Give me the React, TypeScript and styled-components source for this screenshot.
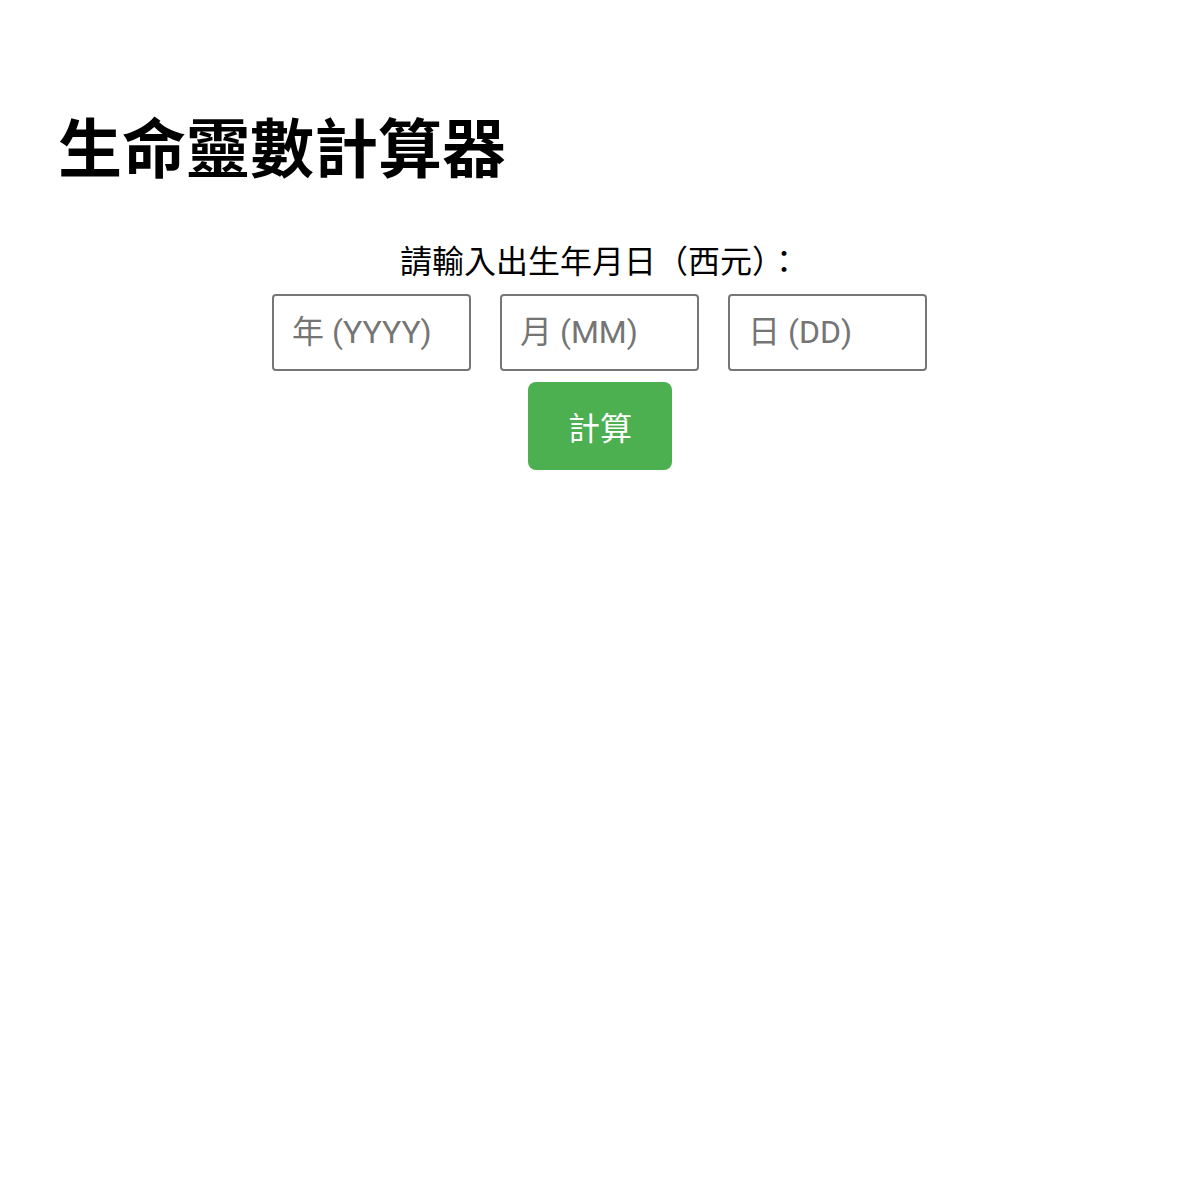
import styled, { createGlobalStyle } from "styled-components";

const GlobalStyle = createGlobalStyle`
  html, body {
    margin: 0;
    padding: 0;
    background: #ffffff;
    font-family: Roboto, "Noto Sans CJK TC", sans-serif;
  }
`;

export default function App() {
  return (
    <>
      <GlobalStyle />
      <Page>
        <Title>生命靈數計算器</Title>
        <Form>
          <Label>請輸入出生年月日（西元）：</Label>
          <InputRow>
            <DateInput type="text" placeholder="年 (YYYY)" />
            <DateInput type="text" placeholder="月 (MM)" />
            <DateInput type="text" placeholder="日 (DD)" />
          </InputRow>
          <CalcButton>計算</CalcButton>
        </Form>
      </Page>
    </>
  );
}

const Page = styled.div`
  padding: 100px 58px 0;
`;

const Title = styled.h1`
  margin: 0;
  font-family: "Noto Sans CJK TC", sans-serif;
  font-size: 64px;
  font-weight: 700;
  line-height: 1.4;
  color: #000;
`;

const Form = styled.div`
  display: flex;
  flex-direction: column;
  align-items: center;
  margin-top: 49px;
`;

const Label = styled.div`
  font-family: Roboto, "Noto Sans CJK TC", sans-serif;
  font-size: 32px;
  line-height: 46px;
  color: #000;
`;

const InputRow = styled.div`
  display: flex;
  gap: 29px;
  margin-top: 9px;
  margin-right: 1px;
`;

const DateInput = styled.input`
  box-sizing: border-box;
  width: 199px;
  height: 77px;
  padding: 0 18px;
  border: 2px solid #767676;
  border-radius: 4px;
  font-family: Roboto, "Noto Sans CJK TC", sans-serif;
  font-size: 32px;
  color: #000;
  outline: none;

  &::placeholder {
    color: #757575;
  }
`;

const CalcButton = styled.button`
  margin-top: 11px;
  width: 144px;
  height: 88px;
  border: none;
  border-radius: 8px;
  background: #4caf50;
  color: #fff;
  font-family: Roboto, "Noto Sans CJK TC", sans-serif;
  font-size: 32px;
  cursor: pointer;
`;
